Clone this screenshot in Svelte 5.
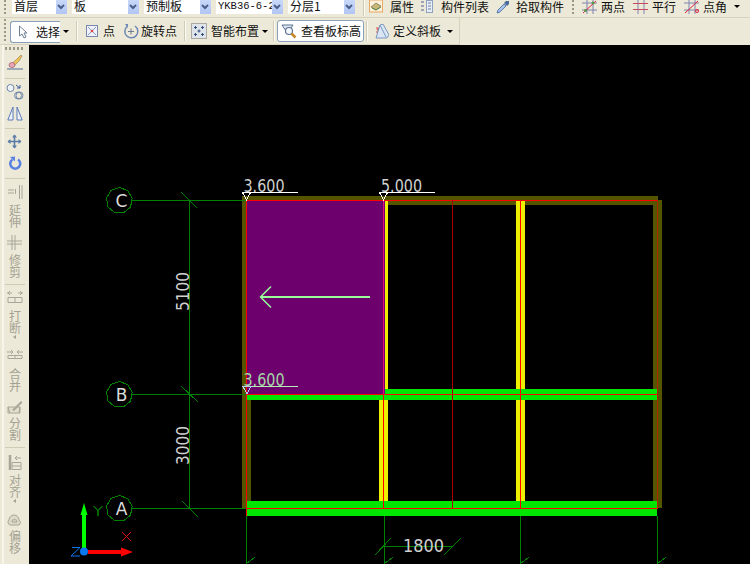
<script>
  const selects = [
    { label: '首层', wide: false },
    { label: '板', wide: true },
    { label: '预制板', wide: true },
    { label: 'YKB36-6-2', wide: true, mono: true },
    { label: '分层1', wide: true }
  ];
  const axes = [
    { name: 'C', y: 200.5 },
    { name: 'B', y: 394.5 },
    { name: 'A', y: 508.5 }
  ];
  const ring = (cy) =>
    Array.from({ length: 9 }, (_, i) => {
      const a = (i / 9) * Math.PI * 2 - Math.PI / 2;
      return `${(119.3 + 13 * Math.cos(a)).toFixed(1)},${(cy + 13 * Math.sin(a)).toFixed(1)}`;
    }).join(' ');
  const bottomTicks = [246, 384, 520, 657];
</script>

<div class="app">
  <header class="bars">
    <div class="row one">
      <span class="grip"></span>
      {#each selects as s}
        <div class="select" class:wide={s.wide}>
          <span class="value" class:mono={s.mono}>{s.label}</span>
          <span class="drop"><svg width="10" height="12" viewBox="0 0 10 12"><path d="M2 5l3 3 3-3" fill="none" stroke="#4a5f88" stroke-width="2"/></svg></span>
        </div>
      {/each}
      <span class="sep first"></span>
      <div class="cmd c1">
        <svg width="14" height="13" viewBox="0 0 14 13"><rect x=".5" y="0" width="13" height="12" fill="#fdf2dc" stroke="#e8a868"/><path d="M2 7l5-4 5 3-5 4z" fill="#c8b878" stroke="#77734f" stroke-width=".7"/><path d="M3 8l4 2 5-3" fill="none" stroke="#5b8a4a"/></svg>
        <span>属性</span>
      </div>
      <div class="cmd c2">
        <svg width="12" height="13" viewBox="0 0 12 13"><path d="M0 1h3v2H0zM0 5h3v2H0zM0 9h3v2H0z" fill="#9aa5b5"/><rect x="5.5" y=".5" width="6" height="12" fill="#e8eef8" stroke="#8ea2c0"/><path d="M7 3h3M7 6h3M7 9h3" stroke="#6a7f9f"/></svg>
        <span>构件列表</span>
      </div>
      <div class="cmd c3">
        <svg width="14" height="14" viewBox="0 0 14 14"><path d="M1 13l1-3 6-6 2 2-6 6z" fill="#a8c4ec" stroke="#5a7cac"/><path d="M8 3l2-2 3 0 0 3-2 2z" fill="#4a6a9a"/></svg>
        <span>拾取构件</span>
      </div>
      <span class="grip bar"></span>
      <div class="cmd c4">
        <svg width="15" height="14" viewBox="0 0 15 14"><path d="M5 0v14M11 0v14M0 3h15M0 10h15" stroke="#7f84b0"/><path d="M1 13L14 1" stroke="#e0203a"/><circle cx="3.500" cy="10.500" r="1.500" fill="#5a9a4a"/><circle cx="11" cy="3" r="1.500" fill="#5a9a4a"/></svg>
        <span>两点</span>
      </div>
      <div class="cmd c5">
        <svg width="15" height="14" viewBox="0 0 15 14"><path d="M5 0v14M11 0v14" stroke="#7f84b0"/><path d="M0 3.500h15M0 9.500h15" stroke="#c84a5a"/></svg>
        <span>平行</span>
      </div>
      <div class="cmd c6">
        <svg width="15" height="14" viewBox="0 0 15 14"><path d="M5 0v14M11 0v14M0 3h15M0 10h15" stroke="#7f84b0"/><path d="M1 13L14 1" stroke="#e0203a"/><circle cx="13" cy="11" r="1.500" fill="none" stroke="#e0203a"/></svg>
        <span>点角</span>
      </div>
      <span class="caret end"></span>
    </div>

    <div class="row two">
      <div class="group">
        <span class="grip tall"></span>
        <div class="active pick">
          <svg width="11" height="14" viewBox="0 0 11 14"><path d="M1.500 1v10l2.500-2 2 4 2-1-2-4h3z" fill="#fff" stroke="#6f7f95"/></svg>
          <span>选择</span>
        </div>
        <span class="caret after-pick"></span>
        <span class="sep s1"></span>
        <div class="cmd d1">
          <svg width="12" height="12" viewBox="0 0 12 12"><rect x=".5" y=".5" width="11" height="11" fill="#eef0fa" stroke="#7a88b0"/><path d="M2 2l8 8M10 2l-8 8" stroke="#8a9abf"/><circle cx="6" cy="6" r="1.300" fill="#e04040"/></svg>
          <span>点</span>
        </div>
        <div class="cmd d2">
          <svg width="16" height="16" viewBox="0 0 16 16"><path d="M4 3.500A6.500 6.500 0 1 0 12 3" fill="none" stroke="#6f87b5" stroke-width="1.500"/><path d="M2 1l3 0 0 4z" fill="#6f87b5"/><path d="M8 5.500v6M5 8.500h6" stroke="#707a90"/></svg>
          <span>旋转点</span>
        </div>
        <span class="sep s2"></span>
        <div class="cmd d3">
          <svg width="16" height="16" viewBox="0 0 16 16"><rect x=".5" y=".5" width="15" height="15" fill="#dfe3ea" stroke="#6a6a6a" stroke-dasharray="1 1"/><path d="M4.500 3v3M3 4.500h3M11.500 3v3M10 4.500h3M4.500 10v3M3 11.500h3M11.500 10v3M10 11.500h3M8 6.500v3M6.500 8h3" stroke="#2f4f7f"/></svg>
          <span>智能布置</span>
        </div>
        <span class="caret after-smart"></span>
        <span class="sep s3"></span>
        <div class="active view">
          <svg width="16" height="16" viewBox="0 0 16 16"><path d="M1 2h11L8 8H5z" fill="#dde8f5" stroke="#5d7291"/><circle cx="8" cy="8" r="3.500" fill="#f4f8fc" stroke="#5d7291" stroke-width="1.200"/><path d="M10.500 10.500l4 4" stroke="#c8862a" stroke-width="2.500"/></svg>
          <span>查看板标高</span>
        </div>
        <span class="sep s4"></span>
        <div class="cmd d4">
          <svg width="14" height="15" viewBox="0 0 14 15"><path d="M1 4h3v1H2l2 3H1" fill="none" stroke="#e04848"/><path d="M5 1l3-1 6 11-2 3H1z" fill="#dbe6f5" stroke="#7a96c0"/><path d="M5 1l6 12" stroke="#7a96c0"/></svg>
          <span>定义斜板</span>
        </div>
        <span class="caret after-slab"></span>
      </div>
    </div>
  </header>

  <main class="work">
    <nav class="side">
      <span class="hgrip"></span>
      <svg class="mt4" width="18" height="16" viewBox="0 0 18 16"><path d="M3 12l8-7 4-4 1 1-3 5-6 6z" fill="#f2c458" stroke="#8a7a4a" stroke-width=".6"/><ellipse cx="6" cy="11" rx="3" ry="2.500" fill="#e8a8b8" stroke="#a05a70" stroke-width=".7"/><path d="M1 15h16" stroke="#7a8ea8" stroke-width="1.400"/></svg>
      <span class="rule mt8"></span>
      <svg class="mt5" width="18" height="16" viewBox="0 0 18 16"><circle cx="4.500" cy="4" r="3.500" fill="#eef2f8" stroke="#7088a8"/><circle cx="12" cy="11.500" r="3.500" fill="none" stroke="#7088a8"/><circle cx="13.500" cy="11.500" r="3.500" fill="none" stroke="#7088a8"/><path d="M10 1l4 3M14 1v3h-3" fill="none" stroke="#3a5a9a"/></svg>
      <svg class="mt6" width="16" height="15" viewBox="0 0 16 15"><path d="M6 1v13H.8zM10 1v13h5.200z" fill="#eef2fa" stroke="#5a7ab8"/></svg>
      <span class="rule mt7"></span>
      <svg class="mt5" width="15" height="15" viewBox="0 0 15 15"><path d="M7.500 1v13M1 7.500h13" stroke="#5a7ca8" stroke-width="1.600"/><path d="M5 3.500l2.500-3 2.500 3zM5 11.500l2.500 3 2.500-3zM3.500 5l-3 2.500 3 2.500zM11.500 5l3 2.500-3 2.500z" fill="#5a7ca8"/></svg>
      <svg class="mt7" width="14" height="15" viewBox="0 0 14 15"><path d="M4.500 3.500a5 5 0 1 0 5.500 0" fill="none" stroke="#5b82e0" stroke-width="2.600"/><path d="M2 1l5-.5 0 5z" fill="#5b82e0"/></svg>
      <span class="rule mt7"></span>

      <svg class="mt6 off" width="16" height="14" viewBox="0 0 16 14"><path d="M1 5h6M1 8h6M8.500 4v5M12.500 0v14M15 0v14" stroke="#a8a698"/></svg>
      <span class="label mt5">延伸</span>
      <svg class="mt7 off" width="16" height="15" viewBox="0 0 16 15"><path d="M0 6h15M0 9h15M5 0v15M8 0v15" stroke="#a8a698"/></svg>
      <span class="label mt4">修剪</span>
      <span class="rule mt6"></span>
      <svg class="mt5 off" width="16" height="13" viewBox="0 0 16 13"><path d="M0 3h5M11 3h5M3 1L1 3l2 2M13 1l2 2-2 2" fill="none" stroke="#a8a698"/><path d="M1 7.500h14v5H1zM8 7.500v5" fill="none" stroke="#a8a698"/></svg>
      <span class="label mt7">打断</span>
      <span class="mark"></span>
      <svg class="mt11 off" width="16" height="9" viewBox="0 0 16 9"><path d="M0 2h6M10 2h6M4 0l2 2-2 2M12 0l-2 2 2 2" fill="none" stroke="#a8a698"/><path d="M1 5.500h14v3H1zM8 5.500v3" fill="none" stroke="#a8a698"/></svg>
      <span class="label mt9">合并</span>
      <svg class="mt8 off" width="16" height="14" viewBox="0 0 16 14"><path d="M1 7h12v6H1zM1 7l2 6M13 7l-1 6" fill="#e2dfcc" stroke="#a8a698"/><path d="M5 10L14 1l1.500 1.500L7 11z" fill="#a8a698"/></svg>
      <span class="label mt3">分割</span>
      <span class="rule mt6"></span>
      <svg class="mt7 off" width="14" height="15" viewBox="0 0 14 15"><path d="M2 0v15" stroke="#a8a698" stroke-width="2.500"/><path d="M4 7.500h9v7H4zM4 11h9M13 3H7M9 1L7 3l2 2" fill="none" stroke="#a8a698"/></svg>
      <span class="label mt4">对齐</span>
      <span class="mark"></span>
      <svg class="mt11 off" width="15" height="12" viewBox="0 0 15 12"><path d="M3 11a3 3 0 0 1-1-5 5 5 0 0 1 10 0 3 3 0 0 1 0 5z" fill="#dcd9c6" stroke="#a8a698"/><path d="M5 8a2.500 2.500 0 0 1 5 0z" fill="none" stroke="#a8a698"/></svg>
      <span class="label mt4">偏移</span>
    </nav>

    <svg class="canvas" width="721" height="519" viewBox="29 45 721 519">
      <g class="crisp">
        <!-- walls -->
        <rect x="242" y="196" width="416" height="9" fill="#555500" />
        <rect x="242" y="196" width="9" height="312" fill="#555500" />
        <rect x="653" y="200" width="9" height="308" fill="#555500" />
        <!-- slab -->
        <rect x="246" y="201" width="139" height="194" fill="#6e006e" />
        <!-- columns -->
        <rect x="385" y="201" width="3" height="188" fill="#eeee00" />
        <rect x="379" y="400" width="9" height="101" fill="#eeee00" />
        <rect x="516" y="201" width="9" height="300" fill="#eeee00" />
        <!-- beams -->
        <rect x="247" y="395" width="410" height="5" fill="#00e600" />
        <rect x="385" y="389" width="272" height="6" fill="#00e600" />
        <rect x="247" y="501" width="410" height="15" fill="#00e600" />
        <!-- grid -->
        <g stroke="#008000" fill="none">
          {#each axes as a}
            <line x1="132" y1={a.y} x2="246" y2={a.y} />
            <polygon points={ring(a.y)} />
          {/each}
          <line x1="189.500" y1="200" x2="189.500" y2="508" />
          <line x1="181" y1="192" x2="197" y2="208" />
          <line x1="181" y1="386" x2="198" y2="402" />
          <line x1="182" y1="501" x2="198" y2="517" />
          {#each bottomTicks as x}
            <line x1={x + 0.5} y1="516" x2={x + 0.5} y2="564" />
            <line x1={x} y1="564" x2={x + 9} y2="557" />
          {/each}
          <line x1="384" y1="546.500" x2="452" y2="546.500" />
          <line x1="375" y1="555" x2="391" y2="538" />
          <line x1="444" y1="555" x2="461" y2="538" />
        </g>
        <!-- beam axes -->
        <g stroke="#ff0000" fill="none">
          <line x1="246" y1="200.500" x2="658" y2="200.500" />
          <line x1="246" y1="394.500" x2="658" y2="394.500" />
          <line x1="246" y1="508.500" x2="658" y2="508.500" />
          <line x1="246.500" y1="200" x2="246.500" y2="516" />
          <line x1="383.500" y1="394" x2="383.500" y2="508" />
          <line x1="520.500" y1="200" x2="520.500" y2="508" />
        </g>
        <line x1="383.500" y1="201" x2="383.500" y2="394" stroke="#e0107a" />
        <line x1="452.500" y1="200" x2="452.500" y2="508" stroke="#aa0000" />
        <line x1="657.500" y1="200" x2="657.500" y2="508" stroke="#aa2a00" />
      </g>

      <!-- slab direction -->
      <g stroke="#99ff99" fill="none">
        <line x1="261" y1="297" x2="370" y2="297" stroke-width="2" />
        <path d="M271 286.500L260.500 297L271 307.500" stroke-width="1.500" />
      </g>

      <!-- elevation labels -->
      <g fill="none" stroke="#fff" class="crisp">
        <line x1="251" y1="192.500" x2="298" y2="192.500" />
        <line x1="388" y1="192.500" x2="435" y2="192.500" />
        <path d="M242.500 192.500h8l-4 7.500zM379.500 192.500h8l-4 7.500z" />
        <line x1="251" y1="386.500" x2="298" y2="386.500" stroke="#b4ecb4" />
        <path d="M243 386.500h8l-4 7.500z" stroke="#b4c8f0" />
      </g>
      <text class="cad" x="243.500" y="192" textLength="41" lengthAdjust="spacingAndGlyphs">3.600</text>
      <text class="cad" x="381" y="192" textLength="41" lengthAdjust="spacingAndGlyphs">5.000</text>
      <text class="cad soft" x="243.500" y="386" textLength="41" lengthAdjust="spacingAndGlyphs">3.600</text>

      <!-- dimensions -->
      <text class="cad" transform="translate(189 311) rotate(-90)" textLength="39" lengthAdjust="spacingAndGlyphs">5100</text>
      <text class="cad" transform="translate(189 465) rotate(-90)" textLength="39" lengthAdjust="spacingAndGlyphs">3000</text>
      <text class="cad" x="403" y="552" textLength="41" lengthAdjust="spacingAndGlyphs">1800</text>

      {#each axes as a}
        <text class="axis" x="121.500" y={a.y + 6.5}>{a.name}</text>
      {/each}

      <!-- UCS -->
      <rect x="82" y="513" width="4" height="35" fill="#00ff00" />
      <path d="M84 503l3.500 12h-7z" fill="#00ff00" />
      <rect x="88" y="550" width="34" height="4" fill="#ff0000" />
      <path d="M133 552l-12-4.500v9z" fill="#ff0000" />
      <circle cx="84" cy="551.500" r="4" fill="#0a78f0" />
      <path d="M93.500 506l4.500 4.500 4.500-4.500M98 510.500V516" fill="none" stroke="#00c800" />
      <path d="M72 547.500h8l-9 8.500h9" fill="none" stroke="#0a78f0" />
      <path d="M122 532l9 9M131 532l-9 9" stroke="#e01010" />
    </svg>
  </main>
</div>

<style>
  :global(html), :global(body) {
    margin: 0;
    overflow: hidden;
  }
  .app {
    width: 750px;
    height: 564px;
    display: flex;
    flex-direction: column;
    overflow: hidden;
    background: #ece9d8;
    font: 12px/12px "Noto Sans CJK SC", "Liberation Sans", sans-serif;
    color: #111;
  }
  .bars {
    flex: none;
    height: 45px;
  }
  .row {
    display: flex;
  }
  .one {
    height: 17px;
    align-items: flex-start;
    border-bottom: 1px solid #d6d2bd;
    box-sizing: content-box;
    white-space: nowrap;
  }
  .two {
    height: 27px;
  }
  .group {
    display: flex;
    align-items: center;
    width: 459px;
    height: 26px;
    border-right: 1px solid #d6d2bd;
    border-bottom: 1px solid #d6d2bd;
  }
  .grip {
    flex: none;
    width: 2px;
    height: 16px;
    margin: 0 6px 0 4px;
    background: repeating-linear-gradient(#9b9884 0 2px, transparent 2px 4px);
  }
  .grip.bar {
    margin: 0 8px 0 8px;
  }
  .grip.tall {
    margin: 0 4px 0 4px;
    height: 24px;
  }
  .select {
    flex: none;
    width: 55px;
    height: 14px;
    margin-right: 5px;
    background: #fff;
    display: flex;
    justify-content: space-between;
    overflow: hidden;
  }
  .select.wide {
    width: 67px;
  }
  .value {
    padding-left: 2px;
    overflow: hidden;
    line-height: 12px;
    height: 14px;
  }
  .value.mono {
    font-family: "Liberation Mono", monospace;
    font-size: 10.5px;
    white-space: nowrap;
  }
  .drop {
    flex: none;
    width: 11px;
    height: 14px;
    background: linear-gradient(#c8d8fb, #b2c6f4);
  }
  .drop svg {
    display: block;
  }
  .sep {
    flex: none;
    width: 1px;
    background: #cfcbb5;
    border-right: 1px solid #fbfaf4;
  }
  .sep.first {
    height: 16px;
    margin: 0 4px 0 3px;
  }
  .cmd {
    flex: none;
    display: flex;
    align-items: center;
  }
  .one .cmd {
    height: 13px;
    overflow: visible;
  }
  .c1 { gap: 7px; }
  .c2 { gap: 8px; margin-left: 7px; }
  .c3 { gap: 6px; margin-left: 7px; }
  .c4 { gap: 4px; }
  .c5 { gap: 4px; margin-left: 8px; }
  .c6 { gap: 4px; margin-left: 8px; }
  .caret {
    flex: none;
    width: 0;
    height: 0;
    border-left: 3px solid transparent;
    border-right: 3px solid transparent;
    border-top: 3px solid #000;
  }
  .caret.end {
    margin: 5px 0 0 7px;
  }
  .active {
    flex: none;
    display: flex;
    align-items: center;
    height: 22px;
    box-sizing: border-box;
    background: #fff;
    border: 1px solid #8a9fb8;
    border-radius: 3px;
  }
  .pick {
    width: 50px;
    gap: 7px;
    padding-left: 7px;
    border-right: 0;
    border-radius: 3px 0 0 3px;
    margin-top: 2px;
  }
  .after-pick { margin-left: 3px; }
  .s1 { height: 20px; margin: 0 8px 0 7px; }
  .d1 { gap: 5px; }
  .d2 { gap: 2px; margin-left: 8px; }
  .s2 { height: 20px; margin: 0 5px 0 7px; }
  .d3 { gap: 4px; }
  .after-smart { margin-left: 3px; }
  .s3 { height: 20px; margin: 0 2px 0 5px; }
  .view {
    width: 87px;
    gap: 4px;
    padding-left: 3px;
    white-space: nowrap;
  }
  .s4 { height: 20px; margin: 0 7px 0 2px; }
  .d4 { gap: 4px; }
  .after-slab { margin-left: 6px; }
  .work {
    flex: 1;
    display: flex;
    min-height: 0;
  }
  .side {
    flex: none;
    width: 29px;
    height: 519px;
    box-sizing: border-box;
    padding-left: 6px;
    background: linear-gradient(90deg, #ece9d8 2px, #f8f6ea 2px 4px, #ece9d8 4px);
    display: flex;
    flex-direction: column;
    align-items: center;
    overflow: hidden;
  }
  .side > * {
    flex: none;
    display: block;
    margin-right: 6px;
  }
  .hgrip {
    width: 20px;
    height: 3px;
    margin-top: 2px;
    background: repeating-linear-gradient(90deg, #9b9884 0 2px, transparent 2px 4px);
  }
  .rule {
    width: 20px;
    height: 1px;
    background: #cfcbb5;
  }
  .label {
    writing-mode: vertical-rl;
    width: 14px;
    height: 24px;
    line-height: 14px;
    color: #a4a292;
  }
  .mark {
    width: 0;
    height: 0;
    margin-top: 1px;
    border-top: 2.5px solid transparent;
    border-bottom: 2.5px solid transparent;
    border-right: 3px solid #a4a292;
  }
  .mt3 { margin-top: 3px; }
  .mt4 { margin-top: 4px; }
  .mt5 { margin-top: 5px; }
  .mt6 { margin-top: 6px; }
  .mt7 { margin-top: 7px; }
  .mt8 { margin-top: 8px; }
  .mt9 { margin-top: 9px; }
  .mt11 { margin-top: 11px; }
  .canvas {
    flex: none;
    display: block;
    background: #000;
  }
  .crisp {
    shape-rendering: crispEdges;
  }
  .cad {
    font: 17px "DejaVu Sans", sans-serif;
    fill: #d0d0d0;
  }
  .cad.soft {
    fill: #a4d8a4;
  }
  .axis {
    font: 17px "DejaVu Sans", sans-serif;
    fill: #dcdcdc;
    text-anchor: middle;
  }
</style>
